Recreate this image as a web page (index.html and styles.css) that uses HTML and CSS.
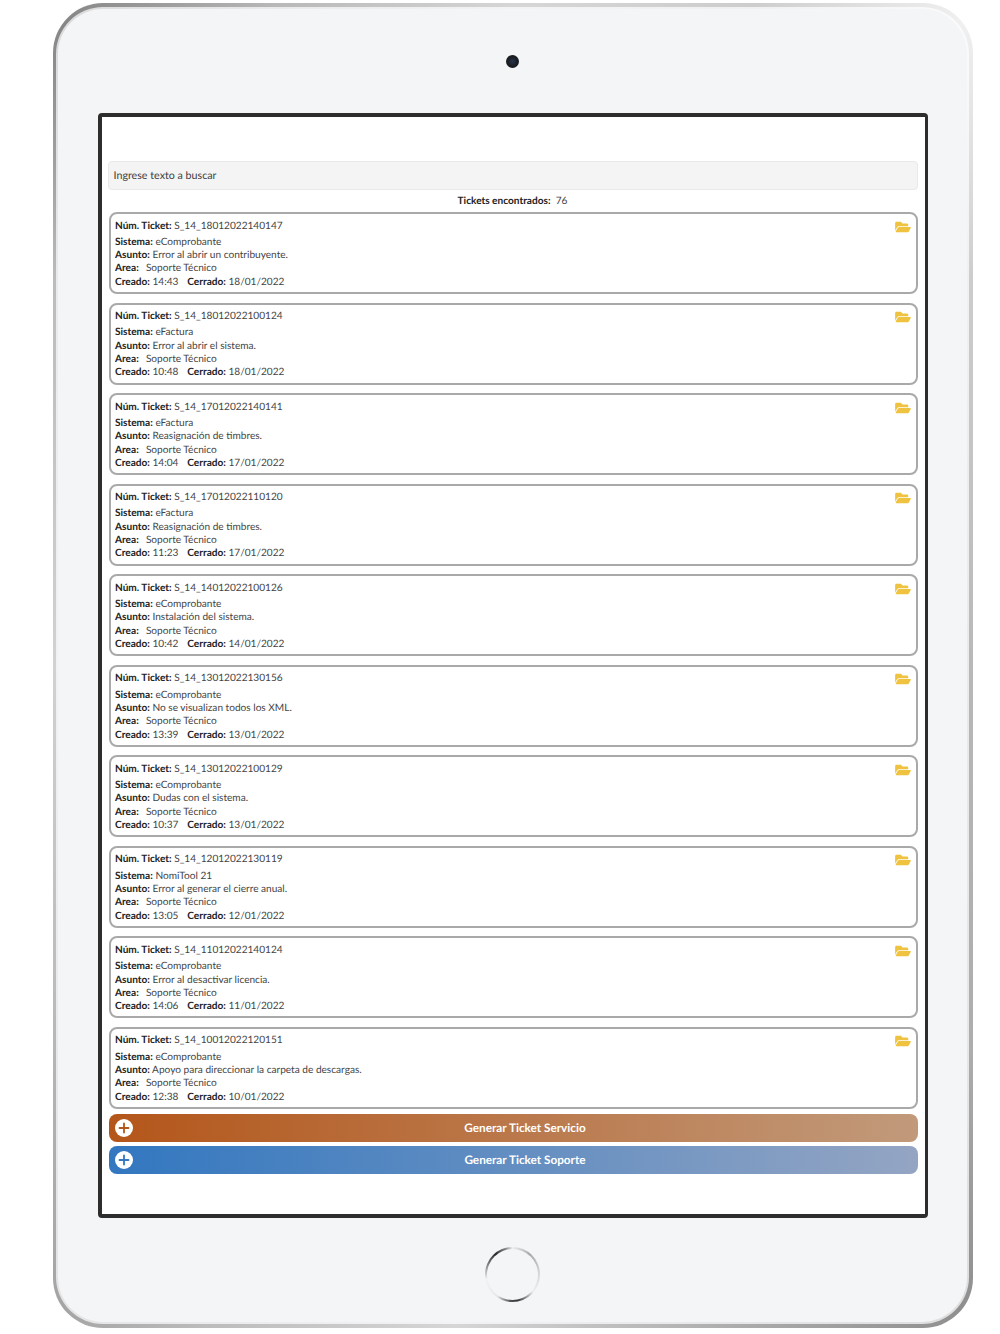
FILE: index.html
```html
<!DOCTYPE html>
<html lang="es">
<head>
<meta charset="utf-8">
<title>Tickets</title>
<link rel="stylesheet" href="styles.css">
</head>
<body>
<svg class="sprite" width="0" height="0">
  <symbol id="folder" viewBox="0 0 576 512"><path d="M572.694 292.093L500.27 416.248A63.997 63.997 0 0 1 444.989 448H45.025c-18.523 0-30.064-20.093-20.731-36.093l72.424-124.155A64 64 0 0 1 152 256h399.964c18.523 0 30.064 20.093 20.73 36.093zM152 224h328v-48c0-26.51-21.49-48-48-48H272l-64-64H48C21.49 64 0 85.49 0 112v278.046l69.077-118.418C86.214 242.25 117.989 224 152 224z"/></symbol>
  <symbol id="plus" viewBox="0 0 18 18"><circle cx="9" cy="9" r="9" fill="#fff"/><path d="M9 4.5v9M4.5 9h9" fill="none" stroke="currentColor" stroke-width="1.8" stroke-linecap="round"/></symbol>
</svg>
<div class="device">
  <div class="bezel">
    <div class="camera"></div>
    <main class="screen">
      <div class="search">Ingrese texto a buscar</div>
      <div class="count"><b>Tickets encontrados:</b>&nbsp; 76</div>
      <div class="list">
        <article class="card">
          <svg class="folder"><use href="#folder"/></svg>
          <p class="num"><b>Núm. Ticket:</b> S_14_18012022140147</p>
          <p><b>Sistema:</b> eComprobante</p>
          <p><b>Asunto:</b> Error al abrir un contribuyente.</p>
          <p class="area"><b>Area:</b>&nbsp; Soporte Técnico</p>
          <p class="dates"><b>Creado:</b> 14:43 &nbsp; <b>Cerrado:</b> 18/01/2022</p>
        </article>
        <article class="card">
          <svg class="folder"><use href="#folder"/></svg>
          <p class="num"><b>Núm. Ticket:</b> S_14_18012022100124</p>
          <p><b>Sistema:</b> eFactura</p>
          <p><b>Asunto:</b> Error al abrir el sistema.</p>
          <p class="area"><b>Area:</b>&nbsp; Soporte Técnico</p>
          <p class="dates"><b>Creado:</b> 10:48 &nbsp; <b>Cerrado:</b> 18/01/2022</p>
        </article>
        <article class="card">
          <svg class="folder"><use href="#folder"/></svg>
          <p class="num"><b>Núm. Ticket:</b> S_14_17012022140141</p>
          <p><b>Sistema:</b> eFactura</p>
          <p><b>Asunto:</b> Reasignación de timbres.</p>
          <p class="area"><b>Area:</b>&nbsp; Soporte Técnico</p>
          <p class="dates"><b>Creado:</b> 14:04 &nbsp; <b>Cerrado:</b> 17/01/2022</p>
        </article>
        <article class="card">
          <svg class="folder"><use href="#folder"/></svg>
          <p class="num"><b>Núm. Ticket:</b> S_14_17012022110120</p>
          <p><b>Sistema:</b> eFactura</p>
          <p><b>Asunto:</b> Reasignación de timbres.</p>
          <p class="area"><b>Area:</b>&nbsp; Soporte Técnico</p>
          <p class="dates"><b>Creado:</b> 11:23 &nbsp; <b>Cerrado:</b> 17/01/2022</p>
        </article>
        <article class="card">
          <svg class="folder"><use href="#folder"/></svg>
          <p class="num"><b>Núm. Ticket:</b> S_14_14012022100126</p>
          <p><b>Sistema:</b> eComprobante</p>
          <p><b>Asunto:</b> Instalación del sistema.</p>
          <p class="area"><b>Area:</b>&nbsp; Soporte Técnico</p>
          <p class="dates"><b>Creado:</b> 10:42 &nbsp; <b>Cerrado:</b> 14/01/2022</p>
        </article>
        <article class="card">
          <svg class="folder"><use href="#folder"/></svg>
          <p class="num"><b>Núm. Ticket:</b> S_14_13012022130156</p>
          <p><b>Sistema:</b> eComprobante</p>
          <p><b>Asunto:</b> No se visualizan todos los XML.</p>
          <p class="area"><b>Area:</b>&nbsp; Soporte Técnico</p>
          <p class="dates"><b>Creado:</b> 13:39 &nbsp; <b>Cerrado:</b> 13/01/2022</p>
        </article>
        <article class="card">
          <svg class="folder"><use href="#folder"/></svg>
          <p class="num"><b>Núm. Ticket:</b> S_14_13012022100129</p>
          <p><b>Sistema:</b> eComprobante</p>
          <p><b>Asunto:</b> Dudas con el sistema.</p>
          <p class="area"><b>Area:</b>&nbsp; Soporte Técnico</p>
          <p class="dates"><b>Creado:</b> 10:37 &nbsp; <b>Cerrado:</b> 13/01/2022</p>
        </article>
        <article class="card">
          <svg class="folder"><use href="#folder"/></svg>
          <p class="num"><b>Núm. Ticket:</b> S_14_12012022130119</p>
          <p><b>Sistema:</b> NomiTool 21</p>
          <p><b>Asunto:</b> Error al generar el cierre anual.</p>
          <p class="area"><b>Area:</b>&nbsp; Soporte Técnico</p>
          <p class="dates"><b>Creado:</b> 13:05 &nbsp; <b>Cerrado:</b> 12/01/2022</p>
        </article>
        <article class="card">
          <svg class="folder"><use href="#folder"/></svg>
          <p class="num"><b>Núm. Ticket:</b> S_14_11012022140124</p>
          <p><b>Sistema:</b> eComprobante</p>
          <p><b>Asunto:</b> Error al desactivar licencia.</p>
          <p class="area"><b>Area:</b>&nbsp; Soporte Técnico</p>
          <p class="dates"><b>Creado:</b> 14:06 &nbsp; <b>Cerrado:</b> 11/01/2022</p>
        </article>
        <article class="card">
          <svg class="folder"><use href="#folder"/></svg>
          <p class="num"><b>Núm. Ticket:</b> S_14_10012022120151</p>
          <p><b>Sistema:</b> eComprobante</p>
          <p><b>Asunto:</b> Apoyo para direccionar la carpeta de descargas.</p>
          <p class="area"><b>Area:</b>&nbsp; Soporte Técnico</p>
          <p class="dates"><b>Creado:</b> 12:38 &nbsp; <b>Cerrado:</b> 10/01/2022</p>
        </article>
      </div>
      <div class="actions">
        <div class="btn btn-service"><svg class="plus"><use href="#plus"/></svg><span>Generar Ticket Servicio</span></div>
        <div class="btn btn-support"><svg class="plus"><use href="#plus"/></svg><span>Generar Ticket Soporte</span></div>
      </div>
    </main>
    <div class="home"></div>
  </div>
</div>
</body>
</html>
```
FILE: styles.css
```css
* { box-sizing: border-box; }
html, body { margin: 0; padding: 0; background: #fff; }
body { font-family: Lato, "Noto Sans", sans-serif; height: 1334px; overflow: hidden; padding-top: 3px; padding-left: 53px; text-rendering: geometricPrecision; }
.sprite { display: block; height: 0; }
p { margin: 0; }
b { font-weight: 700; color: #222; }

.device {
  width: 920px; height: 1325px; padding: 6px 6px 6px 5px; border-radius: 50px;
  background: conic-gradient(#d6d6d6 0, #cdcdcd 20deg, #f0f0f0 35deg, #cccccc 50deg, #b8b8b8 90deg, #adadad 130deg, #8f8f8f 145deg, #aaa 160deg, #d6d6d6 185deg, #bcbcbc 205deg, #a4a4a4 215deg, #bcbcbc 235deg, #d2d2d2 270deg, #bcbcbc 310deg, #858585 325deg, #b8b8b8 340deg, #d6d6d6 360deg);
}
.bezel {
  height: 100%; border-radius: 45px; background: #f4f5f7;
  display: flex; flex-direction: column; align-items: center;
  box-shadow: 0 0 0 2px rgba(255,255,255,.7);
}
.camera {
  width: 13px; height: 13px; margin-top: 46px; border-radius: 50%; flex: none;
  background: radial-gradient(circle, #26344f 0, #1c2026 45%, #111 100%);
}
.screen {
  width: 830px; height: 1105px; margin-top: 45px; flex: none;
  border: 4px solid #2d2d2d; border-right-width: 3px; border-radius: 4px; background: #fff;
  padding: 44px 7px 0 6px; font-size: 10.1px; color: #444;
}
.search {
  height: 29px; padding: 0 5px 1px; display: flex; align-items: center; font-size: 10.7px;
  background: #f4f4f4; border: 1px solid #e9e9e9; border-radius: 4px; color: #3c3c3c;
}
.count { height: 22px; line-height: 22px; text-align: center; }
.list { display: flex; flex-direction: column; gap: 8.56px; padding-left: 1px; }
.card {
  position: relative; height: 82px; padding: 5.5px 6px 0 4.5px;
  border: 2px solid #a9a9a9; border-radius: 8px; background: #fff;
  line-height: 13.33px;
}
.card .num { margin-bottom: 3px; }
.area b { margin-right: 2px; }
.dates b:first-child { margin-right: 0; }
.dates b:last-of-type { margin-left: 1px; }
.folder { position: absolute; top: 5.5px; right: 5px; width: 16px; height: 14px; fill: #efc33f; }
.actions { display: flex; flex-direction: column; gap: 4px; margin-top: 5px; padding-left: 1px; }
.btn {
  height: 28px; border-radius: 8px; padding-left: 6px; display: flex; align-items: center;
  color: #fff; font-weight: 700; font-size: 11.75px;
}
.btn span { flex: 1; text-align: center; padding-bottom: 1px; }
.plus { width: 18px; height: 18px; flex: none; }
.btn-service { background: linear-gradient(90deg, #b4561a, #c19a7b); color: #fff; }
.btn-service .plus { color: #b4561a; }
.btn-support { background: linear-gradient(90deg, #3277c0, #94a5c3); }
.btn-support .plus { color: #3277c0; }
.home {
  position: relative; width: 55px; height: 55px; margin-top: 29px; flex: none; border-radius: 50%;
  background: conic-gradient(from 0deg, #eee 0, #aaa 40deg, #d8d8d8 90deg, #eee 130deg, #333 170deg, #555 185deg, #e8e8e8 215deg, #f2f2f2 260deg, #888 290deg, #2a2a2a 320deg, #888 345deg, #eee 360deg);
}
.home::after { content: ""; position: absolute; inset: 2px; border-radius: 50%; background: #f4f5f7; }
```
